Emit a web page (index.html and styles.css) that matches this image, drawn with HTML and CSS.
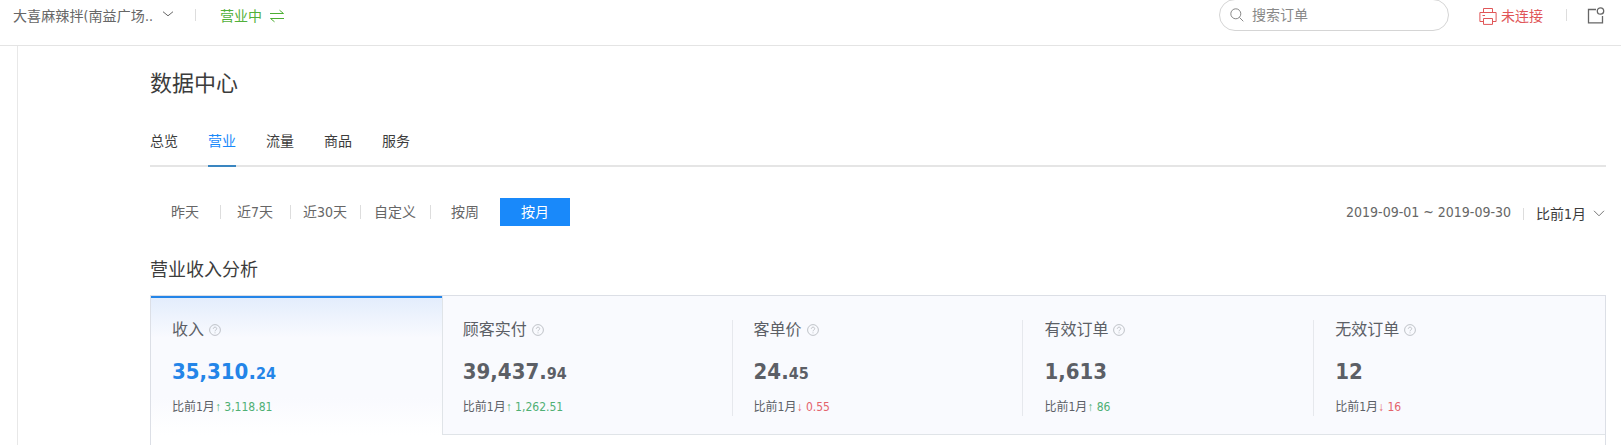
FILE: index.html
```html
<!DOCTYPE html>
<html lang="zh-CN">
<head>
    <meta charset="UTF-8">
    <meta name="viewport" content="width=device-width, initial-scale=1.0">
    <title>数据中心</title>
    <link rel="stylesheet" href="styles.css">
</head>
<body>
    <div class="topbar">
        <span class="shop">大喜麻辣拌(南益广场..</span>
        <svg class="shop-arrow" width="12" height="6" viewBox="0 0 12 6"><path d="M1 .7 L6 4.8 L11 .7"/></svg>
        <span class="line"></span>
        <span class="status">营业中</span>
        <svg class="swap" width="16" height="14" viewBox="0 0 16 14"><path d="M1 4.5 H14.5 L10.5 1.2 M15 9.5 H1.5 L5.5 12.8"/></svg>
        <div class="search">
            <svg width="14" height="14" viewBox="0 0 14 14"><circle cx="5.8" cy="5.8" r="5"/><path d="M9.4 9.4 L13.3 13.3"/></svg>
            <span>搜索订单</span>
        </div>
        <div class="printer">
            <svg width="18" height="17" viewBox="0 0 18 17"><path d="M4.5 4.5 V.5 H13.5 V4.5 M4.5 13.5 H.9 V4.5 H17.1 V13.5 H13.5 M4.5 10.5 H13.5 V16.4 H4.5 Z M3.5 7.5 H6"/></svg>
            <span>未连接</span>
        </div>
        <span class="line"></span>
        <svg class="notice" width="18" height="17" viewBox="0 0 18 17"><path d="M9 2.5 H1.5 V15.8 H15.5 V9"/><circle cx="13.5" cy="4" r="3.2"/></svg>
    </div>

    <div class="page">
        <div class="content">
            <h1>数据中心</h1>
            <div class="tabs">
                <span class="tab">总览</span>
                <span class="tab active">营业</span>
                <span class="tab">流量</span>
                <span class="tab">商品</span>
                <span class="tab">服务</span>
            </div>

            <div class="filters">
                <span class="filter">昨天</span>
                <span class="filter">近7天</span>
                <span class="filter">近30天</span>
                <span class="filter">自定义</span>
                <span class="filter">按周</span>
                <span class="filter active">按月</span>
                <span class="date">2019-09-01 ~ 2019-09-30</span>
                <span class="line"></span>
                <span class="compare">比前1月</span>
                <svg class="compare-arrow" width="12" height="7" viewBox="0 0 12 7"><path d="M1 .8 L6 5.8 L11 .8"/></svg>
            </div>

            <h2>营业收入分析</h2>
            <div class="panel">
                <div class="card active">
                    <div class="label">收入 <svg class="help" width="12" height="12" viewBox="0 0 12 12"><circle cx="6" cy="6" r="5.4"/><path d="M4.3 4.8 C4.3 2.6 7.7 2.6 7.7 4.7 C7.7 6 6 5.9 6 7.3 M6 8.4 V9.3"/></svg></div>
                    <div class="number">35,310.<small>24</small></div>
                    <div class="trend">比前1月<span class="up"><i>↑</i> 3,118.81</span></div>
                </div>
                <div class="card">
                    <div class="label">顾客实付 <svg class="help" width="12" height="12" viewBox="0 0 12 12"><circle cx="6" cy="6" r="5.4"/><path d="M4.3 4.8 C4.3 2.6 7.7 2.6 7.7 4.7 C7.7 6 6 5.9 6 7.3 M6 8.4 V9.3"/></svg></div>
                    <div class="number">39,437.<small>94</small></div>
                    <div class="trend">比前1月<span class="up"><i>↑</i> 1,262.51</span></div>
                </div>
                <div class="card">
                    <div class="label">客单价 <svg class="help" width="12" height="12" viewBox="0 0 12 12"><circle cx="6" cy="6" r="5.4"/><path d="M4.3 4.8 C4.3 2.6 7.7 2.6 7.7 4.7 C7.7 6 6 5.9 6 7.3 M6 8.4 V9.3"/></svg></div>
                    <div class="number">24.<small>45</small></div>
                    <div class="trend">比前1月<span class="down"><i>↓</i> 0.55</span></div>
                </div>
                <div class="card">
                    <div class="label">有效订单 <svg class="help" width="12" height="12" viewBox="0 0 12 12"><circle cx="6" cy="6" r="5.4"/><path d="M4.3 4.8 C4.3 2.6 7.7 2.6 7.7 4.7 C7.7 6 6 5.9 6 7.3 M6 8.4 V9.3"/></svg></div>
                    <div class="number">1,613</div>
                    <div class="trend">比前1月<span class="up"><i>↑</i> 86</span></div>
                </div>
                <div class="card">
                    <div class="label">无效订单 <svg class="help" width="12" height="12" viewBox="0 0 12 12"><circle cx="6" cy="6" r="5.4"/><path d="M4.3 4.8 C4.3 2.6 7.7 2.6 7.7 4.7 C7.7 6 6 5.9 6 7.3 M6 8.4 V9.3"/></svg></div>
                    <div class="number">12</div>
                    <div class="trend">比前1月<span class="down"><i>↓</i> 16</span></div>
                </div>
            </div>
        </div>
    </div>
</body>
</html>
```
FILE: styles.css
```css
* {
    box-sizing: border-box;
}

body {
    margin: 0;
    height: 445px;
    overflow: hidden;
    display: flex;
    flex-direction: column;
    background-color: #fff;
    color: #3c3c3c;
    font-family: "DejaVu Sans Condensed", "Noto Sans CJK SC", sans-serif;
    font-size: 14px;
    line-height: 20px;
    white-space: nowrap;
}

svg {
    display: block;
    flex: none;
    fill: none;
    stroke: currentColor;
    stroke-width: 1;
}

.line {
    width: 1px;
    height: 12px;
    background-color: #ddd;
}

.topbar {
    display: flex;
    align-items: center;
    flex: none;
    height: 46px;
    padding: 0 16px 13px 13px;
    border-bottom: 1px solid #e4e4e4;
    color: #666;
}

.topbar .line {
    margin-bottom: 3px;
}

.shop {
    width: 149px;
    letter-spacing: 0.1px;
}

.shop-arrow {
    margin-right: 21px;
    margin-bottom: 4px;
}

.status {
    margin-left: 24px;
    color: #52b03a;
}

.swap {
    margin-left: 7px;
    margin-bottom: 1px;
    color: #4cae32;
}

.search {
    display: flex;
    align-items: center;
    width: 230px;
    height: 32px;
    margin: -2px 30px 0 auto;
    padding-left: 10px;
    gap: 8px;
    border: 1px solid #d5d5d5;
    border-radius: 16px;
    color: #888;
}

.printer {
    display: flex;
    align-items: center;
    gap: 4px;
    margin-right: 23px;
    color: #e05658;
}

.notice {
    margin-left: 20px;
    margin-bottom: 2px;
    stroke-width: 1.3;
}

.page {
    flex: 1;
    display: flex;
    margin-left: 17px;
    padding: 0 15px 0 132px;
    border-left: 1px solid #e8e8e8;
}

.content {
    flex: 1;
    display: flex;
    flex-direction: column;
}

h1 {
    margin: 22px 0 0;
    font-size: 22px;
    line-height: 32px;
    font-weight: normal;
}

.tabs {
    display: flex;
    gap: 30px;
    height: 36px;
    margin-top: 31px;
    border-bottom: 2px solid #e5e5e5;
}

.tab {
    height: 36px;
}

.tab.active {
    color: #1989fa;
    border-bottom: 2px solid #3a86c0;
}

.filters {
    display: flex;
    align-items: center;
    height: 28px;
    margin-top: 31px;
    color: #666;
}

.filter {
    display: flex;
    align-items: center;
    justify-content: center;
    width: 70px;
    height: 28px;
}

.filter:nth-child(-n+4)::after {
    content: "";
    width: 1px;
    height: 14px;
    margin-left: auto;
    margin-right: -1px;
    background-color: #ddd;
}

.filter:nth-child(-n+4)::before {
    content: "";
    margin-right: auto;
}

.filter.active {
    background-color: #1989fa;
    color: #fff;
}

.date {
    margin-left: auto;
    margin-right: 12px;
}

.filters .line {
    margin-top: 3px;
}

.compare {
    margin: 3px 7px 0 12px;
    color: #3c3c3c;
}

.compare-arrow {
    margin-top: 3px;
    margin-right: 1px;
    color: #777;
}

h2 {
    margin: 30px 0 0;
    font-size: 18px;
    line-height: 28px;
    font-weight: normal;
}

.panel {
    display: flex;
    flex: 1;
    align-items: flex-start;
    margin-top: 11px;
    border: 1px solid #dcdfe6;
    border-bottom: none;
}

.card {
    position: relative;
    flex: 1;
    height: 139px;
    padding: 22px 0 0 21px;
    background-color: #f9fafe;
    border-bottom: 1px solid #e0e4e8;
    color: #5c5f66;
}

.card.active {
    padding-top: 20px;
    border-top: 2px solid #2485e8;
    border-bottom: none;
    background: linear-gradient(#e3edfc, #f9fafe 40px, #f9fafe 100px, #fff);
}

.card.active + .card {
    border-left: 1px solid #e0e4e8;
    padding-left: 20px;
}

/* short divider between the cards */
.card:nth-child(n+3)::before {
    content: "";
    position: absolute;
    left: -1px;
    top: 24px;
    width: 1px;
    height: 96px;
    background-color: #e6e8ed;
}

.label {
    display: flex;
    align-items: center;
    gap: 5px;
    font-size: 16px;
    line-height: 24px;
}

.help {
    color: #b9bcc2;
    stroke-width: 0.9;
}

.number {
    height: 32px;
    margin-top: 14px;
    font-size: 22px;
    line-height: 32px;
    font-weight: bold;
}

.number small {
    font-size: 16px;
    line-height: 1;
}

.card.active .number {
    color: #2485e8;
}

.trend {
    margin-top: 9px;
    font-size: 12px;
    line-height: 20px;
}

.trend i {
    font-family: "Liberation Sans", sans-serif;
    font-style: normal;
}

.up {
    color: #4fb074;
}

.down {
    color: #e4636c;
}
```
